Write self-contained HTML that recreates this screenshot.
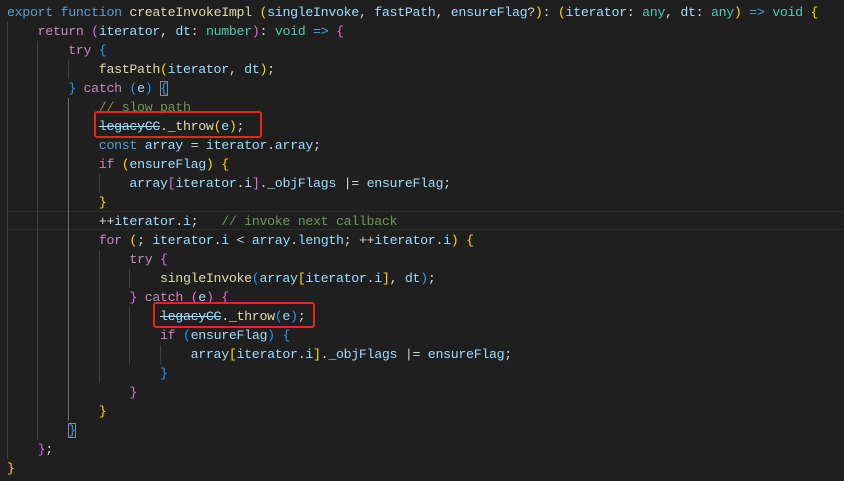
<!DOCTYPE html>
<html><head><meta charset="utf-8"><style>
html,body{margin:0;padding:0;background:#1f1f1f;width:844px;height:481px;overflow:hidden}
#c{position:relative;width:844px;height:481px;font-family:"Liberation Mono",monospace;font-size:13.3px;letter-spacing:-0.33px;color:#d4d4d4}
.l{position:absolute;left:7px;height:19px;line-height:19px;white-space:pre}
.g{position:absolute;width:1px;background:#404040}
.ga{background:#6e6e6e}
.k{color:#569cd6}.c{color:#c586c0}.f{color:#dcdcaa}.v{color:#9cdcfe}.t{color:#4ec9b0}.cm{color:#6a9955}
.y{color:#ffd700}.p{color:#da70d6}.b{color:#179fff}
.s{text-decoration:line-through}
.box{position:absolute;border:2px solid #e8251c;border-radius:3px}
.bm{outline:1px solid #888;outline-offset:-1px}
</style></head><body><div id="c">
<div style="position:absolute;left:7px;right:0;top:211px;height:17px;border-top:1px solid #2c2c2c;border-bottom:1px solid #2c2c2c"></div>
<div class="g" style="left:7px;top:22px;height:437px"></div>
<div class="g" style="left:37px;top:41px;height:399px"></div>
<div class="g" style="left:68px;top:60px;height:19px"></div>
<div class="g ga" style="left:68px;top:98px;height:323px"></div>
<div class="g" style="left:99px;top:174px;height:19px"></div>
<div class="g" style="left:99px;top:250px;height:133px"></div>
<div class="g" style="left:129px;top:269px;height:19px"></div>
<div class="g" style="left:129px;top:307px;height:57px"></div>
<div class="g" style="left:160px;top:345px;height:19px"></div>

<div class="l" style="top:3px"><span class="k">export</span> <span class="k">function</span> <span class="f">createInvokeImpl</span> <span class="y">(</span><span class="v">singleInvoke</span>, <span class="v">fastPath</span>, <span class="v">ensureFlag</span>?<span class="y">)</span>: <span class="y">(</span><span class="v">iterator</span>: <span class="t">any</span>, <span class="v">dt</span>: <span class="t">any</span><span class="y">)</span> <span class="k">=&gt;</span> <span class="t">void</span> <span class="y">{</span></div>
<div class="l" style="top:22px">    <span class="c">return</span> <span class="p">(</span><span class="v">iterator</span>, <span class="v">dt</span>: <span class="t">number</span><span class="p">)</span>: <span class="t">void</span> <span class="k">=&gt;</span> <span class="p">{</span></div>
<div class="l" style="top:41px">        <span class="c">try</span> <span class="b">{</span></div>
<div class="l" style="top:60px">            <span class="f">fastPath</span><span class="y">(</span><span class="v">iterator</span>, <span class="v">dt</span><span class="y">)</span>;</div>
<div class="l" style="top:79px">        <span class="b">}</span> <span class="c">catch</span> <span class="b">(</span><span class="v">e</span><span class="b">)</span> <span class="b bm">{</span></div>
<div class="l" style="top:98px">            <span class="cm">// slow path</span></div>
<div class="l" style="top:117px">            <span class="v s">legacyCC</span>.<span class="f">_throw</span><span class="y">(</span><span class="v">e</span><span class="y">)</span>;</div>
<div class="l" style="top:136px">            <span class="k">const</span> <span class="v">array</span> = <span class="v">iterator</span>.<span class="v">array</span>;</div>
<div class="l" style="top:155px">            <span class="c">if</span> <span class="y">(</span><span class="v">ensureFlag</span><span class="y">)</span> <span class="y">{</span></div>
<div class="l" style="top:174px">                <span class="v">array</span><span class="p">[</span><span class="v">iterator</span>.<span class="v">i</span><span class="p">]</span>.<span class="v">_objFlags</span> |= <span class="v">ensureFlag</span>;</div>
<div class="l" style="top:193px">            <span class="y">}</span></div>
<div class="l" style="top:212px">            ++<span class="v">iterator</span>.<span class="v">i</span>;   <span class="cm">// invoke next callback</span></div>
<div class="l" style="top:231px">            <span class="c">for</span> <span class="y">(</span>; <span class="v">iterator</span>.<span class="v">i</span> &lt; <span class="v">array</span>.<span class="v">length</span>; ++<span class="v">iterator</span>.<span class="v">i</span><span class="y">)</span> <span class="y">{</span></div>
<div class="l" style="top:250px">                <span class="c">try</span> <span class="p">{</span></div>
<div class="l" style="top:269px">                    <span class="f">singleInvoke</span><span class="b">(</span><span class="v">array</span><span class="y">[</span><span class="v">iterator</span>.<span class="v">i</span><span class="y">]</span>, <span class="v">dt</span><span class="b">)</span>;</div>
<div class="l" style="top:288px">                <span class="p">}</span> <span class="c">catch</span> <span class="p">(</span><span class="v">e</span><span class="p">)</span> <span class="p">{</span></div>
<div class="l" style="top:307px">                    <span class="v s">legacyCC</span>.<span class="f">_throw</span><span class="b">(</span><span class="v">e</span><span class="b">)</span>;</div>
<div class="l" style="top:326px">                    <span class="c">if</span> <span class="b">(</span><span class="v">ensureFlag</span><span class="b">)</span> <span class="b">{</span></div>
<div class="l" style="top:345px">                        <span class="v">array</span><span class="y">[</span><span class="v">iterator</span>.<span class="v">i</span><span class="y">]</span>.<span class="v">_objFlags</span> |= <span class="v">ensureFlag</span>;</div>
<div class="l" style="top:364px">                    <span class="b">}</span></div>
<div class="l" style="top:383px">                <span class="p">}</span></div>
<div class="l" style="top:402px">            <span class="y">}</span></div>
<div class="l" style="top:421px">        <span class="b bm">}</span></div>
<div class="l" style="top:440px">    <span class="p">}</span>;</div>
<div class="l" style="top:459px"><span class="y">}</span></div>

<div class="box" style="left:94px;top:111px;width:164px;height:23px"></div>
<div class="box" style="left:153px;top:302px;width:158px;height:22px"></div>
</div></body></html>
